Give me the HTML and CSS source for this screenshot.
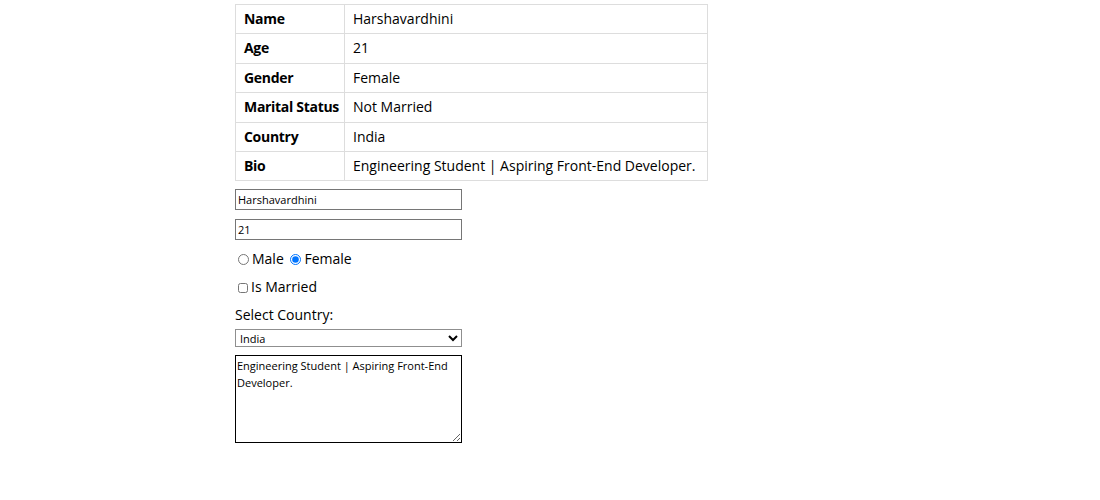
FILE: index.html
```html
<!DOCTYPE html>
<html>
<head>
<meta charset="utf-8">
<link rel="stylesheet" href="styles.css">
</head>
<body>
<div class="wrap">
  <table class="info">
    <colgroup><col class="c1"><col class="c2"></colgroup>
    <tr><th>Name</th><td>Harshavardhini</td></tr>
    <tr><th>Age</th><td>21</td></tr>
    <tr><th>Gender</th><td>Female</td></tr>
    <tr><th>Marital Status</th><td>Not Married</td></tr>
    <tr><th>Country</th><td>India</td></tr>
    <tr><th>Bio</th><td>Engineering Student | Aspiring Front-End Developer.</td></tr>
  </table>
  <form class="form">
    <div class="row"><input class="text" type="text" value="Harshavardhini"></div>
    <div class="row"><input class="text" type="text" value="21"></div>
    <div class="row opt"><label><input type="radio" name="g">Male</label> <label><input type="radio" name="g" checked>Female</label></div>
    <div class="row opt"><label><input type="checkbox">Is Married</label></div>
    <div class="row lbl">Select Country:</div>
    <div class="row"><select class="sel"><option>India</option></select></div>
    <div class="row"><textarea class="bio">Engineering Student | Aspiring Front-End Developer.</textarea></div>
  </form>
</div>
</body>
</html>
```
FILE: styles.css
```css
html, body { margin: 0; padding: 0; background: #fff; }
body { font-family: "Open Sans", "Liberation Sans", sans-serif; font-size: 14px; color: #000; }
.wrap { padding: 4px 0 0 235px; }
.info { border-collapse: collapse; width: 473px; table-layout: fixed; }
.c1 { width: 109px; }
.info th, .info td { border: 1px solid #ddd; padding: 4px 8px; text-align: left; line-height: 20.4px; font-size: 14px; white-space: nowrap; }
.info th { font-weight: 700; letter-spacing: -0.3px; }
.form { margin-top: 8px; }
.row { margin: 0; }
.text { width: 227px; height: 21px; box-sizing: border-box; font-family: inherit; font-size: 11px; border: 1px solid #767676; padding: 1px 2px; margin: 0 0 9px 0; display: block; }
.opt { line-height: 20px; margin-bottom: 8px; }
.opt input { width: 11px; height: 11px; margin: 3px 3px 0 3px; vertical-align: -1px; }
.opt input[type="checkbox"] { width: 10px; height: 10px; }
.lbl { line-height: 20px; margin: 2px 0 4px; }
.sel { width: 227px; height: 18px; font-family: inherit; font-size: 11px; margin: 0 0 8px 0; display: block; border: 1px solid #8f8f8f; border-radius: 0; background: #fff; }
.bio { width: 227px; height: 88px; box-sizing: border-box; font-family: inherit; font-size: 11px; line-height: 17px; border: 1px solid #000; padding: 1px 1px; margin: 0; display: block; resize: both; }
```
